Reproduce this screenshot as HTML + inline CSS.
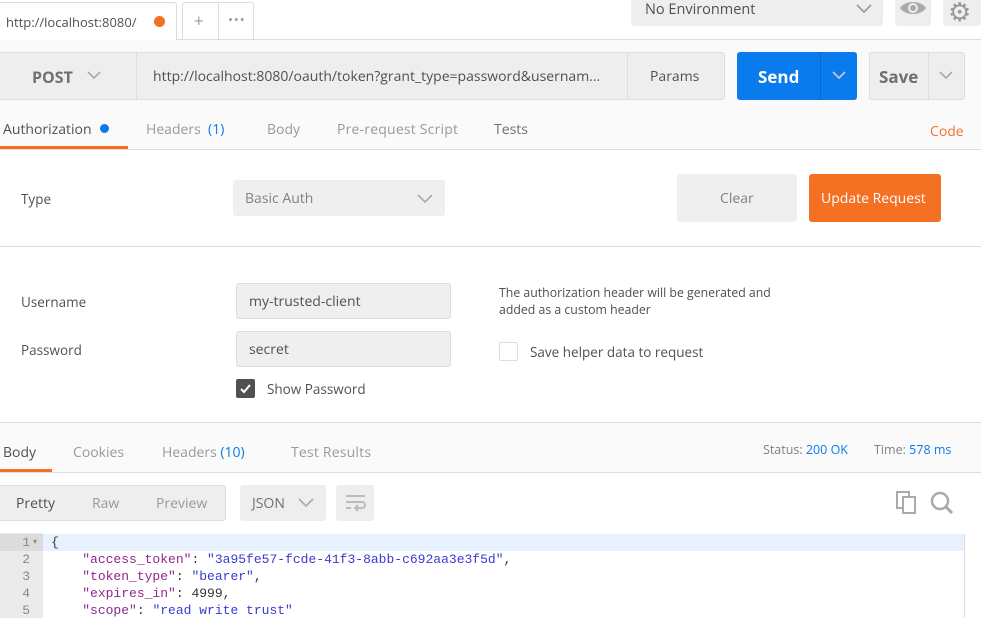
<!DOCTYPE html>
<html><head><meta charset="utf-8"><style>
*{box-sizing:border-box;margin:0;padding:0}
body{width:981px;height:618px;overflow:hidden;background:#fff;font-family:"Open Sans","Liberation Sans",sans-serif;font-size:13px;color:#505050;position:relative}
.a{position:absolute}
.g{color:#808080}
.blue{color:#097bed}
.mono{font-family:"Liberation Mono","DejaVu Sans Mono",monospace;font-size:13px}
</style></head><body>
<div class="a" style="left:0;top:39px;width:981px;height:1px;background:#ddd"></div>
<div class="a" style="left:0;top:2px;width:177px;height:38px;background:#fff;border:1px solid #ddd;border-left:none;border-bottom:none;border-radius:0 3px 0 0"></div>
<div class="a" style="left:6px;top:13px;font-size:13px;color:#505050">http://localhost:8080/</div>
<div class="a" style="left:154px;top:16px;width:11px;height:11px;border-radius:50%;background:#f47023"></div>
<div class="a" style="left:182px;top:2px;width:72px;height:37px;border:1px solid #ddd;border-bottom:none;border-radius:3px 3px 0 0;background:#fff"></div>
<div class="a" style="left:218px;top:3px;width:1px;height:36px;background:#ddd"></div>
<div class="a g" style="left:194px;top:9px;font-size:17px;color:#999">+</div>
<div class="a" style="left:228px;top:10px;font-size:13px;color:#999;letter-spacing:1px">•••</div>
<div class="a" style="left:631px;top:-4px;width:252px;height:30px;background:#eee;border-radius:4px"></div>
<div class="a" style="left:645px;top:0px;font-size:14.5px;color:#505050">No Environment</div>
<svg class="a" style="left:856px;top:4px" width="16" height="10"><path d="M1 1l7 7 7-7" stroke="#999" stroke-width="1.6" fill="none"/></svg>
<div class="a" style="left:895px;top:-4px;width:36px;height:30px;background:#eee;border-radius:4px"></div>
<svg class="a" style="left:899px;top:0" width="28" height="18"><path d="M1 8C6 0 22 0 27 8C22 16 6 16 1 8Z" fill="#aaa"/><circle cx="14" cy="8" r="5" fill="#eee"/><circle cx="14" cy="8" r="3" fill="#aaa"/></svg>
<div class="a" style="left:943px;top:-4px;width:38px;height:30px;background:#eee;border-radius:4px"></div>
<div class="a" style="left:948px;top:-7px;font-size:26px;color:#999">⚙</div>
<div class="a" style="left:0;top:40px;width:981px;height:110px;background:#fafafa"></div>
<div class="a" style="left:0;top:52px;width:137px;height:48px;background:#eee;border:1px solid #ddd;border-left:none"></div>
<div class="a" style="left:32px;top:66px;font-size:16px;font-weight:bold;color:#707070">POST</div>
<svg class="a" style="left:87px;top:71px" width="14" height="9"><path d="M1 1l6 6 6-6" stroke="#aaa" stroke-width="1.6" fill="none"/></svg>
<div class="a" style="left:136px;top:52px;width:589px;height:48px;background:#eee;border:1px solid #ddd;border-radius:0 3px 3px 0"></div>
<div class="a" style="left:627px;top:53px;width:1px;height:46px;background:#ddd"></div>
<div class="a" style="left:153px;top:67px;font-size:14px;color:#505050">http://localhost:8080/oauth/token?grant_type=password&amp;usernam...</div>
<div class="a" style="left:650px;top:67px;font-size:14px;color:#505050">Params</div>
<div class="a" style="left:737px;top:52px;width:120px;height:48px;background:#097bed;border-radius:3px"></div>
<div class="a" style="left:820px;top:52px;width:1px;height:48px;background:#0a66c4"></div>
<div class="a" style="left:758px;top:65px;font-size:17px;font-weight:bold;color:#fff">Send</div>
<svg class="a" style="left:832px;top:71px" width="14" height="9"><path d="M1 1l6 6 6-6" stroke="#ccc" stroke-width="1.6" fill="none"/></svg>
<div class="a" style="left:869px;top:52px;width:96px;height:48px;background:#eee;border:1px solid #ddd;border-radius:3px"></div>
<div class="a" style="left:928px;top:53px;width:1px;height:46px;background:#ddd"></div>
<div class="a" style="left:879px;top:65px;font-size:17px;font-weight:bold;color:#707070">Save</div>
<svg class="a" style="left:939px;top:71px" width="14" height="9"><path d="M1 1l6 6 6-6" stroke="#aaa" stroke-width="1.6" fill="none"/></svg>
<div class="a" style="left:3px;top:120px;font-size:14px;color:#505050">Authorization</div>
<div class="a" style="left:100px;top:124px;width:9px;height:9px;border-radius:50%;background:#097bed"></div>
<div class="a" style="left:146px;top:120px;font-size:14px;color:#999">Headers <span class="blue">&nbsp;(1)</span></div>
<div class="a" style="left:267px;top:120px;font-size:14px;color:#999">Body</div>
<div class="a" style="left:337px;top:120px;font-size:14px;color:#999;letter-spacing:0.2px">Pre-request Script</div>
<div class="a" style="left:494px;top:120px;font-size:14px;color:#707070">Tests</div>
<div class="a" style="left:930px;top:122px;font-size:14px;color:#f47023">Code</div>
<div class="a" style="left:0;top:146px;width:128px;height:3px;background:#f47023"></div>
<div class="a" style="left:0;top:149px;width:981px;height:1px;background:#ddd"></div>
<div class="a" style="left:21px;top:190px;font-size:13.5px">Type</div>
<div class="a" style="left:233px;top:180px;width:212px;height:36px;background:#efefef;border-radius:3px"></div>
<div class="a" style="left:245px;top:189px;font-size:14px;color:#808080">Basic Auth</div>
<svg class="a" style="left:417px;top:194px" width="16" height="10"><path d="M1 1l7 7 7-7" stroke="#aaa" stroke-width="1.6" fill="none"/></svg>
<div class="a" style="left:677px;top:174px;width:120px;height:48px;background:#efefef;border-radius:3px"></div>
<div class="a" style="left:720px;top:189px;font-size:14px;color:#808080">Clear</div>
<div class="a" style="left:809px;top:174px;width:132px;height:48px;background:#f47023;border-radius:3px"></div>
<div class="a" style="left:821px;top:189px;font-size:14px;color:#fff">Update Request</div>
<div class="a" style="left:0;top:246px;width:981px;height:1px;background:#ddd"></div>
<div class="a" style="left:21px;top:293px;font-size:13.5px">Username</div>
<div class="a" style="left:236px;top:283px;width:215px;height:36px;background:#efefef;border:1px solid #ddd;border-radius:3px"></div>
<div class="a" style="left:249px;top:292px;font-size:14px">my-trusted-client</div>
<div class="a" style="left:21px;top:341px;font-size:13.5px">Password</div>
<div class="a" style="left:236px;top:331px;width:215px;height:36px;background:#efefef;border:1px solid #ddd;border-radius:3px"></div>
<div class="a" style="left:249px;top:340px;font-size:14px">secret</div>
<div class="a" style="left:236px;top:379px;width:19px;height:19px;background:#505050;border-radius:2px"></div>
<svg class="a" style="left:238px;top:381px" width="15" height="15"><path d="M3 8l3 3 6-7" stroke="#fff" stroke-width="2" fill="none"/></svg>
<div class="a" style="left:267px;top:380px;font-size:13.5px">Show Password</div>
<div class="a" style="left:499px;top:284px;font-size:12.3px;line-height:17px">The authorization header will be generated and<br>added as a custom header</div>
<div class="a" style="left:499px;top:342px;width:19px;height:19px;border:1px solid #ddd;border-radius:2px;background:#fff"></div>
<div class="a" style="left:530px;top:343px;font-size:13.5px">Save helper data to request</div>
<div class="a" style="left:0;top:422px;width:981px;height:51px;background:#fafafa;border-top:1px solid #ddd;border-bottom:1px solid #ddd"></div>
<div class="a" style="left:3px;top:443px;font-size:14px">Body</div>
<div class="a" style="left:73px;top:443px;font-size:14px;color:#999">Cookies</div>
<div class="a" style="left:162px;top:443px;font-size:14px;color:#999">Headers <span class="blue">(10)</span></div>
<div class="a" style="left:291px;top:443px;font-size:14px;color:#999;letter-spacing:0.2px">Test Results</div>
<div class="a" style="left:0;top:469px;width:52px;height:3px;background:#f47023"></div>
<div class="a" style="left:763px;top:441px;font-size:12.5px;color:#808080">Status: <span class="blue">200 OK</span></div>
<div class="a" style="left:874px;top:441px;font-size:12.5px;color:#808080">Time: <span class="blue">578 ms</span></div>
<div class="a" style="left:0;top:485px;width:226px;height:36px;background:#eee;border:1px solid #ddd;border-left:none;border-radius:0 3px 3px 0"></div>
<div class="a" style="left:16px;top:494px;font-size:14px">Pretty</div>
<div class="a" style="left:92px;top:494px;font-size:14px;color:#999">Raw</div>
<div class="a" style="left:156px;top:494px;font-size:14px;color:#999">Preview</div>
<div class="a" style="left:240px;top:485px;width:86px;height:36px;background:#eee;border-radius:3px"></div>
<div class="a" style="left:252px;top:494px;font-size:14px;color:#707070">JSON</div>
<svg class="a" style="left:298px;top:498px" width="16" height="10"><path d="M1 1l7 7 7-7" stroke="#aaa" stroke-width="1.6" fill="none"/></svg>
<div class="a" style="left:336px;top:485px;width:38px;height:36px;background:#eee;border-radius:3px"></div>
<svg class="a" style="left:344px;top:493px" width="24" height="20"><path d="M2 3h19M2 9h16a3 3 0 0 1 0 6h-6M2 15h5" stroke="#bbb" stroke-width="2" fill="none"/><path d="M14 12l-3 3 3 3" stroke="#bbb" stroke-width="2" fill="none"/></svg>
<svg class="a" style="left:896px;top:491px" width="22" height="24"><rect x="1" y="1" width="12" height="16" fill="none" stroke="#aaa" stroke-width="2"/><rect x="7" y="6" width="12" height="16" fill="#fff" stroke="#aaa" stroke-width="2"/></svg>
<svg class="a" style="left:930px;top:491px" width="24" height="24"><circle cx="10" cy="10" r="8" fill="none" stroke="#aaa" stroke-width="2.5"/><path d="M16 16l6 6" stroke="#aaa" stroke-width="3"/></svg>
<div class="a" style="left:0;top:533px;width:43px;height:85px;background:#ebebeb"></div>
<div class="a" style="left:43px;top:534px;width:922px;height:17px;background:#e8f2fe;border-right:1px solid #ddd"></div>
<div class="a" style="left:43px;top:551px;width:922px;height:67px;border-right:1px solid #ddd"></div>
<div class="a" style="left:0;top:534px;width:43px;height:17px;background:#dcdcdc"></div>
<div class="a mono" style="left:0;top:534px;width:30px;text-align:right;line-height:17px;color:#888">1<br>2<br>3<br>4<br>5</div>
<div class="a" style="left:33px;top:536px;font-size:8px;color:#888">▾</div>
<div class="a mono" style="left:51px;top:534px;line-height:17px;white-space:pre;color:#333">{
    <span style="color:#92278f">"access_token"</span>: <span style="color:#3a3ad4">"3a95fe57-fcde-41f3-8abb-c692aa3e3f5d"</span>,
    <span style="color:#92278f">"token_type"</span>: <span style="color:#3a3ad4">"bearer"</span>,
    <span style="color:#92278f">"expires_in"</span>: <span style="color:#333">4999</span>,
    <span style="color:#92278f">"scope"</span>: <span style="color:#3a3ad4">"read write trust"</span></div>
</body></html>
